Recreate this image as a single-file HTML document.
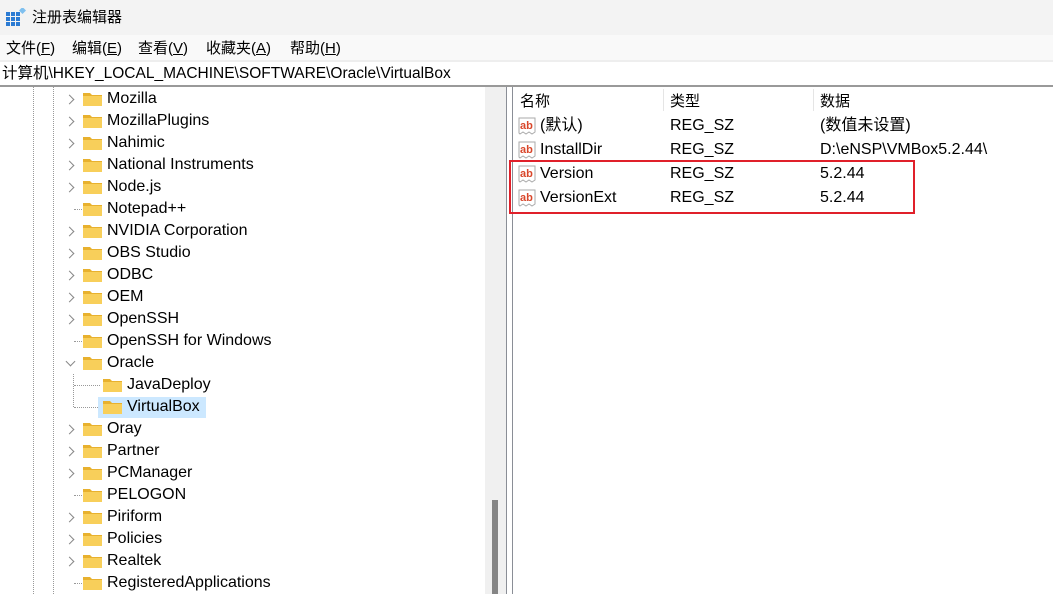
<!DOCTYPE html>
<html><head><meta charset="utf-8"><style>
body{margin:0;width:1053px;height:594px;overflow:hidden;background:#fff;font-family:"Liberation Sans","Noto Sans CJK SC",sans-serif;font-size:16px;color:#000;position:relative}
.a{position:absolute;white-space:nowrap;line-height:20px}
.fold{position:absolute;width:19px;height:14px}
.chev{position:absolute;width:6px;height:6px;border-right:1.3px solid #888;border-bottom:1.3px solid #888;transform:rotate(-45deg)}
.ab{position:absolute;width:18px;height:18px}
</style></head><body>
<div class="a" style="left:0;top:0;width:1053px;height:35px;background:#f3f3f3"></div>
<svg class="a" style="left:6px;top:8px" width="20" height="18"><g fill="#2b7bd3"><rect x="0" y="4" width="4" height="4"/><rect x="5" y="4" width="4" height="4"/><rect x="10" y="4" width="4" height="4"/><rect x="0" y="9" width="4" height="4"/><rect x="5" y="9" width="4" height="4"/><rect x="10" y="9" width="4" height="4"/><rect x="0" y="14" width="4" height="4"/><rect x="5" y="14" width="4" height="4"/><rect x="10" y="14" width="4" height="4"/></g><rect x="14" y="0" width="5" height="5" fill="#7fc0ef" transform="rotate(45 16.5 2.5)"/></svg>
<div class="a" style="left:32px;top:8px;font-size:15px">注册表编辑器</div>
<div class="a" style="left:0;top:35px;width:1053px;height:25px;background:#f9f9f9"></div>
<div class="a" style="left:6px;top:39px;font-size:15px">文件(<u>F</u>)</div>
<div class="a" style="left:72px;top:39px;font-size:15px">编辑(<u>E</u>)</div>
<div class="a" style="left:138px;top:39px;font-size:15px">查看(<u>V</u>)</div>
<div class="a" style="left:206px;top:39px;font-size:15px">收藏夹(<u>A</u>)</div>
<div class="a" style="left:290px;top:39px;font-size:15px">帮助(<u>H</u>)</div>
<div class="a" style="left:0;top:60px;width:1053px;height:2px;background:#eee"></div>
<div class="a" style="left:2px;top:64px;font-size:15.5px">计算机\HKEY_LOCAL_MACHINE\SOFTWARE\Oracle\VirtualBox</div>
<div class="a" style="left:0;top:85px;width:1053px;height:2px;background:#999"></div>
<div class="a" style="left:33px;top:87px;height:507px;border-left:1px dotted #999"></div>
<div class="a" style="left:53px;top:87px;height:507px;border-left:1px dotted #999"></div>
<div class="a" style="left:73px;top:374px;height:33px;border-left:1px dotted #999"></div>
<div class="a" style="left:74px;top:385px;width:26px;border-top:1px dotted #999"></div>
<div class="a" style="left:74px;top:407px;width:26px;border-top:1px dotted #999"></div>
<div class="a" style="left:98px;top:397px;width:108px;height:21px;background:#cce8ff"></div>
<div id="tree"></div>
<div class="a" style="left:485px;top:87px;width:21px;height:507px;background:#f0f0f0"></div>
<div class="a" style="left:492px;top:500px;width:6px;height:94px;background:#858585"></div>
<div class="a" style="left:506px;top:87px;width:1px;height:507px;background:#8a8e96"></div>
<div class="a" style="left:512px;top:87px;width:1px;height:507px;background:#8a8e96"></div>
<div class="a" style="left:663px;top:89px;width:1px;height:22px;background:#e5e5e5"></div>
<div class="a" style="left:813px;top:89px;width:1px;height:22px;background:#e5e5e5"></div>
<div class="a" style="left:520px;top:92px;font-size:15px">名称</div>
<div class="a" style="left:670px;top:92px;font-size:15px">类型</div>
<div class="a" style="left:820px;top:92px;font-size:15px">数据</div>
<div id="vals"></div>
<div class="a" style="left:509px;top:160px;width:402px;height:50px;border:2px solid #e0202a"></div>
<script>
var names=["Mozilla","MozillaPlugins","Nahimic","National Instruments","Node.js","Notepad++","NVIDIA Corporation","OBS Studio","ODBC","OEM","OpenSSH","OpenSSH for Windows","Oracle","JavaDeploy","VirtualBox","Oray","Partner","PCManager","PELOGON","Piriform","Policies","Realtek","RegisteredApplications"];
var noarrow={"Notepad++":1,"OpenSSH for Windows":1,"PELOGON":1,"RegisteredApplications":1};
var h="";
function folder(x,y){return '<svg class="fold" style="left:'+x+'px;top:'+y+'px" viewBox="0 0 19 14"><path d="M0 1h7l2 2h10v11H0z" fill="#e8b12e"/><path d="M0 4h19v10H0z" fill="#f8cf5a"/></svg>';}
names.forEach(function(n,i){var y=99+i*22;var child=(n=="JavaDeploy"||n=="VirtualBox");
if(child){h+=folder(103,y-7)+'<div class="a" style="left:127px;top:'+(y-10)+'px">'+n+'</div>';}
else{ if(noarrow[n]) h+='<div class="a" style="left:74px;top:'+y+'px;width:8px;border-top:1px dotted #999"></div>';
else if(n=="Oracle") h+='<div class="chev" style="left:67px;top:'+(y-5)+'px;transform:rotate(45deg)"></div>';
else h+='<div class="chev" style="left:66px;top:'+(y-3)+'px"></div>';
h+=folder(83,y-7)+'<div class="a" style="left:107px;top:'+(y-10)+'px">'+n+'</div>';}});
document.getElementById('tree').innerHTML=h;
var v=[["(默认)","(数值未设置)"],["InstallDir","D:\\eNSP\\VMBox5.2.44\\"],["Version","5.2.44"],["VersionExt","5.2.44"]];
var g="";v.forEach(function(r,i){var y=126+i*24;
g+='<svg class="ab" style="left:518px;top:'+(y-9)+'px" viewBox="0 0 18 18"><path d="M1 1h16v14l-3 2-3-2-3 2-3-2-3 2-1-1z" fill="#fff" stroke="#aaa"/><text x="2" y="12" font-size="11" font-weight="bold" fill="#d9472b" font-family="Liberation Sans">ab</text></svg>';
g+='<div class="a" style="left:540px;top:'+(y-10)+'px">'+r[0]+'</div><div class="a" style="left:670px;top:'+(y-10)+'px">REG_SZ</div><div class="a" style="left:820px;top:'+(y-10)+'px">'+r[1]+'</div>';});
document.getElementById('vals').innerHTML=g;
</script>
</body></html>
